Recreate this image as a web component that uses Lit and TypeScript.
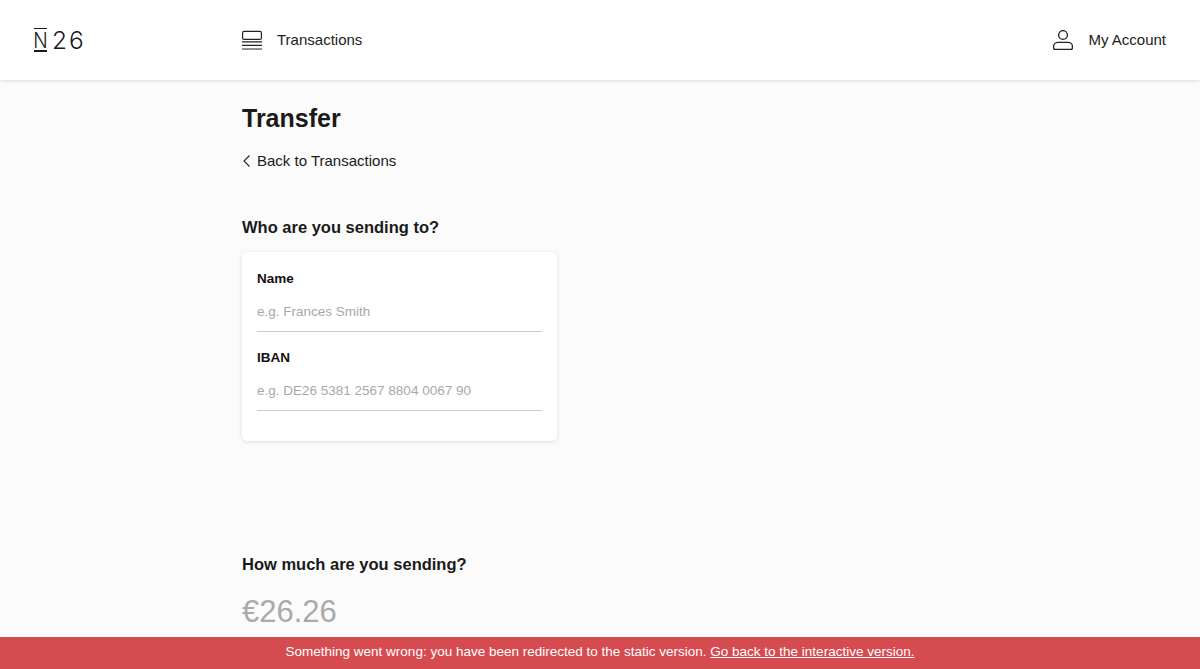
import { LitElement, html, css } from "lit";
import { customElement } from "lit/decorators.js";

@customElement("app-root")
export class AppRoot extends LitElement {
  static styles = css`
    :host { display: block; height: 669px; overflow: hidden; background: #fbfbfb; color: #1a1a1a; font-family: "Liberation Sans", Arial, sans-serif; position: relative; }
    header { height: 80px; background: #fff; box-shadow: 0 1px 4px rgba(0,0,0,.12); display: flex; align-items: center; padding: 0 34px; position: relative; }
    .logo { width: 208px; display: flex; align-items: center; font-family: "Inter", sans-serif; font-weight: 300; font-size: 24.5px; line-height: 24px; color: #1a1a1a; }
    .logo .n { border-top: 1.5px solid #1a1a1a; border-bottom: 2px solid #1a1a1a; font-size: 19px; line-height: 21px; width: 13px; display: flex; justify-content: center; }
    .logo .n span { display: block; transform: translateY(1px) scaleY(1.14); }
    .logo .d { margin-left: 5px; letter-spacing: 2px; }
    .nav { display: flex; align-items: center; gap: 15px; font-size: 15px; color: #222; }
    .nav svg { display: block; }
    .nav span { padding-bottom: 2px; }
    .spacer { flex: 1; }
    main { padding: 23px 0 0 242px; }
    h1 { margin: 0; font-size: 25px; line-height: 31px; font-weight: 700; }
    .back { display: flex; align-items: center; gap: 6px; margin-top: 17px; font-size: 15px; line-height: 20px; }
    h2 { margin: 0; font-size: 16.5px; line-height: 22px; font-weight: 700; }
    .who { margin-top: 45px; }
    .card { margin-top: 14px; width: 315px; height: 189px; box-sizing: border-box; background: #fff; border-radius: 5px; box-shadow: 0 1px 4px rgba(0,0,0,.12); padding: 18px 15px 0; }
    .field { height: 79px; }
    label { display: block; font-size: 13.5px; line-height: 17px; font-weight: 700; color: #111; }
    .input { margin-top: 8px; height: 37px; box-sizing: border-box; border-bottom: 1px solid #ccc; font-size: 13.5px; line-height: 34px; color: #a8a8a8; }
    .how { margin-top: 112px; }
    .amount { margin-top: 17px; font-size: 31px; line-height: 40px; color: #aaa; }
    .banner { position: absolute; left: 0; right: 0; bottom: 0; height: 32px; background: #d64b50; color: #fff; font-size: 13.5px; line-height: 30px; text-align: center; }
    .banner a { color: inherit; text-decoration: underline; }
  `;

  render() {
    return html`
      <header>
        <div class="logo"><span class="n"><span>N</span></span><span class="d">26</span></div>
        <div class="nav">
          <svg width="20" height="20" viewBox="0 0 20 20" fill="none" stroke="#222" stroke-width="1.2">
            <rect x="0.6" y="1.4" width="18.8" height="8" rx="1.5"></rect>
            <path d="M0 11.8h20M0 15.4h20M0 19h20"></path>
          </svg>
          <span>Transactions</span>
        </div>
        <div class="spacer"></div>
        <div class="nav">
          <svg width="20" height="20" viewBox="0 0 20 20" fill="none" stroke="#222" stroke-width="1.3">
            <circle cx="10" cy="5" r="4.4"></circle>
            <path d="M5 12.4h10a4.4 3.8 0 0 1 4.4 3.8v2a1.5 1.5 0 0 1-1.5 1.3H2.1A1.5 1.5 0 0 1 .6 18.2v-2a4.4 3.800 0 0 1 4.4-3.8z"></path>
          </svg>
          <span>My Account</span>
        </div>
      </header>
      <main>
        <h1>Transfer</h1>
        <div class="back">
          <svg width="9" height="14" viewBox="0 0 9 14" fill="none" stroke="#222" stroke-width="1.1"><path d="M7.5 1.5L2 7l5.5 5.5"></path></svg>
          <span>Back to Transactions</span>
        </div>
        <h2 class="who">Who are you sending to?</h2>
        <div class="card">
          <div class="field"><label>Name</label><div class="input">e.g. Frances Smith</div></div>
          <div class="field"><label>IBAN</label><div class="input">e.g. DE26 5381 2567 8804 0067 90</div></div>
        </div>
        <h2 class="how">How much are you sending?</h2>
        <div class="amount">€26.26</div>
      </main>
      <div class="banner">Something went wrong: you have been redirected to the static version. <a href="#">Go back to the interactive version.</a></div>
    `;
  }
}
